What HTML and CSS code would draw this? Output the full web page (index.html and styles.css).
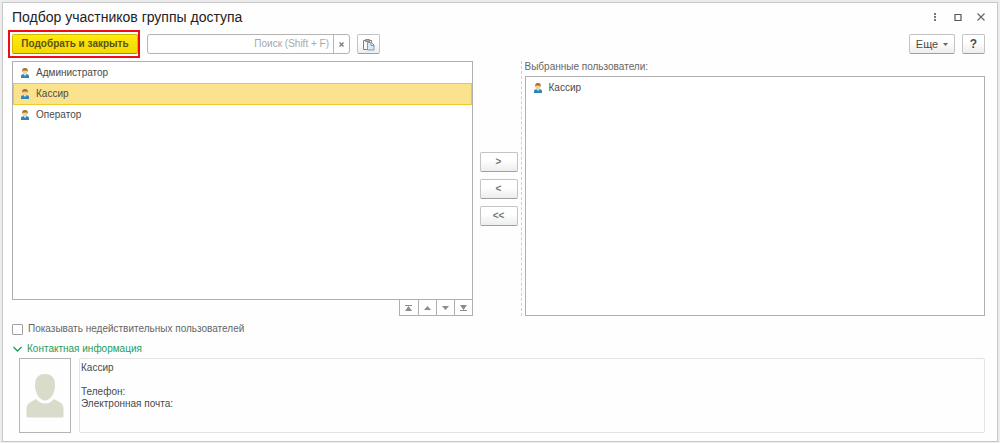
FILE: index.html
```html
<!DOCTYPE html>
<html lang="ru">
<head>
    <meta charset="UTF-8">
    <meta name="viewport" content="width=device-width, initial-scale=1.0">
    <title>Подбор участников группы доступа</title>
    <link rel="stylesheet" href="styles.css">
</head>
<body>

    <svg class="sprite" aria-hidden="true">
        <symbol id="user" viewBox="0 0 10 10">
            <path d="M1 10V8Q1 6.500 3 6.200H7Q9 6.500 9 8V10Z" fill="#2d86b8"/>
            <path d="M3.800 6H6.200L5 8.200Z" fill="#f5f5f0"/>
            <ellipse cx="5" cy="3.800" rx="2.300" ry="2.600" fill="#f3cf9c"/>
            <path d="M2.300 4Q1.500 0 5 0T7.700 4L7 2.800Q5 2.200 3 2.800Z" fill="#a8702c"/>
        </symbol>
    </svg>

    <div class="window">
        <header class="titlebar">
            <h1>Подбор участников группы доступа</h1>
            <div class="window-buttons">
                <button type="button" aria-label="Меню">
                    <svg width="10" height="10" viewBox="0 0 10 10"><path d="M4 1h2v2H4zM4 4h2v2H4zM4 7h2v2H4z" fill="#777"/></svg>
                </button>
                <button type="button" aria-label="Развернуть">
                    <svg width="10" height="10" viewBox="0 0 10 10"><path d="M2 2.500h6v6H2z" fill="none" stroke="#555" stroke-width="1.200"/></svg>
                </button>
                <button type="button" aria-label="Закрыть">
                    <svg width="10" height="10" viewBox="0 0 10 10"><path d="M1.500 1.500l7 7M8.500 1.500l-7 7" stroke="#666" stroke-width="1.200"/></svg>
                </button>
            </div>
        </header>

        <div class="toolbar">
            <div class="highlight">
                <button type="button" class="btn btn-main">Подобрать и закрыть</button>
            </div>
            <div class="search">
                <input type="text" placeholder="Поиск (Shift + F)" aria-label="Поиск">
                <button type="button" aria-label="Очистить">
                    <svg width="5" height="5" viewBox="0 0 5 5"><path d="M.5.5l4 4M4.500.5l-4 4" stroke="#777" stroke-width="1.200"/></svg>
                </button>
            </div>
            <button type="button" class="btn btn-icon" aria-label="Вставить">
                <svg width="13" height="13" viewBox="0 0 13 13">
                    <path d="M1.500 2.500h8v9h-8z" fill="#f8f8f8" stroke="#a0755a"/>
                    <path d="M3.500 1.500h4v2h-4z" fill="#aaa" stroke="#888"/>
                    <path d="M5.500 4.500h4l2.500 2.500v5H5.500z" fill="#dce7ee" stroke="#8299a8"/>
                    <path d="M9 4.500V7.500h3" fill="none" stroke="#8299a8"/>
                </svg>
            </button>
            <button type="button" class="btn btn-more">Еще
                <svg width="5" height="3" viewBox="0 0 5 3"><path d="M0 0h5L2.500 3z" fill="#666"/></svg>
            </button>
            <button type="button" class="btn btn-help" aria-label="Справка">?</button>
        </div>

        <main class="picker">
            <section class="source">
                <ul class="list" aria-label="Пользователи">
                    <li><svg class="user"><use href="#user"/></svg>Администратор</li>
                    <li class="selected"><svg class="user"><use href="#user"/></svg>Кассир</li>
                    <li><svg class="user"><use href="#user"/></svg>Оператор</li>
                </ul>
                <div class="pager">
                    <button type="button" aria-label="В начало">
                        <svg width="7" height="6" viewBox="0 0 7 6"><path d="M0 0h7v1H0zM3.500 1L7 6H0z"/></svg>
                    </button>
                    <button type="button" aria-label="Вверх">
                        <svg width="7" height="6" viewBox="0 0 7 6"><path d="M3.500 1L7 5H0z"/></svg>
                    </button>
                    <button type="button" aria-label="Вниз">
                        <svg width="7" height="6" viewBox="0 0 7 6"><path d="M0 1h7L3.500 5z"/></svg>
                    </button>
                    <button type="button" aria-label="В конец">
                        <svg width="7" height="6" viewBox="0 0 7 6"><path d="M0 0h7L3.500 5zM0 5h7v1H0z"/></svg>
                    </button>
                </div>
            </section>

            <div class="move">
                <button type="button" class="btn">&gt;</button>
                <button type="button" class="btn">&lt;</button>
                <button type="button" class="btn">&lt;&lt;</button>
            </div>

            <section class="chosen">
                <h2 id="chosen-title">Выбранные пользователи:</h2>
                <ul class="list" aria-labelledby="chosen-title">
                    <li><svg class="user"><use href="#user"/></svg>Кассир</li>
                </ul>
            </section>
        </main>

        <label class="show-invalid">
            <input type="checkbox">
            Показывать недействительных пользователей
        </label>

        <details class="contacts" open>
            <summary>
                <svg width="9" height="6" viewBox="0 0 9 6"><path d="M.5 1l4 4 4-4" fill="none" stroke="#1f9c5c" stroke-width="1.300"/></svg>
                Контактная информация
            </summary>
            <div class="card">
                <div class="avatar">
                    <svg width="38" height="44" viewBox="0 0 38 44">
                        <path d="M19 0C26 0 29 4 29 11 29 20 24 26.500 19 26.500S9 20 9 11C9 4 12 0 19 0Z" fill="#d9dccb"/>
                        <path d="M10 25Q14 29.500 19 29.500T28 25L35 29Q37 30.500 37.500 34V42Q37.500 43.500 36 43.500H2Q.5 43.500.5 42V34Q1 30.500 3 29Z" fill="#d9dccb"/>
                    </svg>
                </div>
                <div class="info">
                    <p>Кассир</p>
                    <p class="phone">Телефон:</p>
                    <p>Электронная почта:</p>
                </div>
            </div>
        </details>
    </div>

</body>
</html>
```

FILE: styles.css
```css
* {
    box-sizing: border-box;
}

body {
    margin: 0;
    padding: 2px 2px 1px;
    min-height: 100vh;
    display: flex;
    background: #ececec;
    color: #4a4a4a;
    font: 10px/12px "Liberation Sans", Arial, sans-serif;
}

h1, h2, p, ul {
    margin: 0;
    padding: 0;
    font-weight: normal;
}

button, input {
    font: inherit;
    color: inherit;
    margin: 0;
    padding: 0;
}

svg {
    flex-shrink: 0;
}

.sprite {
    position: absolute;
    width: 0;
    height: 0;
}

.window {
    flex: 1;
    display: flex;
    flex-direction: column;
    padding: 0 12px 8px 5px;
    background: #fefefe;
    border: 1px solid #c8c8c8;
}

.titlebar {
    display: flex;
    align-items: center;
    justify-content: space-between;
    height: 27px;
    padding-left: 4px;
}

h1 {
    font-size: 14px;
    line-height: 20px;
    color: #222;
}

.window-buttons {
    display: flex;
    gap: 13px;
    margin-right: -1px;
}

.window-buttons button {
    display: flex;
    border: 0;
    background: none;
}

.toolbar {
    display: flex;
    align-items: center;
    gap: 7px;
    margin-bottom: 3px;
}

.btn {
    display: flex;
    align-items: center;
    justify-content: center;
    height: 20px;
    border: 1px solid #c4c4c4;
    border-bottom-color: #a0a0a0;
    border-radius: 2px;
    background: linear-gradient(#fff 40%, #ededed);
}

.highlight {
    padding: 2px 0 2px 2px;
    border: 2px solid #f00c14;
}

.btn-main {
    width: 126px;
    font-weight: bold;
    color: #5c5210;
    border-color: #d2b800;
    border-bottom-color: #a08c00;
    background: linear-gradient(#ffea10, #f2d800);
}

.search {
    display: flex;
    width: 203px;
    height: 20px;
    border: 1px solid #b4b4b4;
    border-radius: 3px;
    background: #fff;
}

.search input {
    flex: 1;
    min-width: 0;
    padding-right: 4px;
    border: 0;
    background: none;
    text-align: right;
}

.search input::placeholder {
    color: #a8a8a8;
}

.search button {
    display: flex;
    align-items: center;
    justify-content: center;
    width: 16px;
    border: 0;
    border-left: 1px solid #b4b4b4;
    background: none;
}

.btn-icon, .btn-help {
    width: 23px;
}

.btn-more {
    width: 46px;
    gap: 5px;
    margin-left: auto;
    font-size: 11px;
}

.btn-help {
    font-size: 12px;
    font-weight: bold;
}

.picker {
    flex: 1;
    display: grid;
    grid-template-columns: 1fr auto 1fr;
    padding-left: 4px;
}

.source, .chosen {
    display: flex;
    flex-direction: column;
}

.list {
    flex: 1;
    list-style: none;
    border: 1px solid #b0b0b0;
    background: #fff;
}

.list li {
    display: flex;
    align-items: center;
    gap: 6px;
    height: 22px;
    padding-left: 6px;
    border: 1px solid transparent;
}

.list li + li {
    margin-top: -1px;
}

.list .selected {
    background: #fbe38d;
    border-color: #eecb2c;
}

.user {
    width: 10px;
    height: 10px;
}

.pager {
    display: flex;
    align-self: flex-end;
    border: solid #b0b0b0;
    border-width: 0 1px 1px;
}

.pager button {
    display: flex;
    align-items: center;
    justify-content: center;
    width: 18px;
    height: 15px;
    border: 0;
    background: none;
    fill: #8c8c8c;
}

.pager button + button {
    border-left: 1px solid #b0b0b0;
}

.move {
    display: flex;
    flex-direction: column;
    justify-content: center;
    gap: 7px;
    padding: 0 3px 0 7px;
    border-right: 1px dashed #d0d0d0;
    margin-right: 3px;
}

.move .btn {
    width: 38px;
    font-weight: bold;
    color: #777;
}

.chosen h2 {
    font-size: 10px;
    line-height: 12px;
    margin-bottom: 3px;
    color: #666;
}

.show-invalid {
    display: flex;
    align-items: center;
    gap: 5px;
    margin: 7px 0 0 4px;
    align-self: flex-start;
    color: #666;
}

.show-invalid input {
    appearance: none;
    width: 11px;
    height: 11px;
    border: 1px solid #a0a0a0;
    border-radius: 1px;
    background: #fff;
}

.contacts {
    margin-top: 8px;
    padding-left: 4px;
}

.contacts summary {
    display: flex;
    align-items: center;
    gap: 5px;
    padding-left: 1px;
    list-style: none;
    color: #1f9c5c;
}

.card {
    display: flex;
    gap: 8px;
    margin: 3px 0 0 7px;
}

.avatar {
    display: flex;
    align-items: center;
    justify-content: center;
    width: 52px;
    height: 75px;
    border: 1px solid #b4b4b4;
}

.info {
    flex: 1;
    padding: 3px 1px;
    border: 1px solid #e2e2e2;
    border-radius: 2px;
}

.phone {
    margin-top: 12px;
}
```
